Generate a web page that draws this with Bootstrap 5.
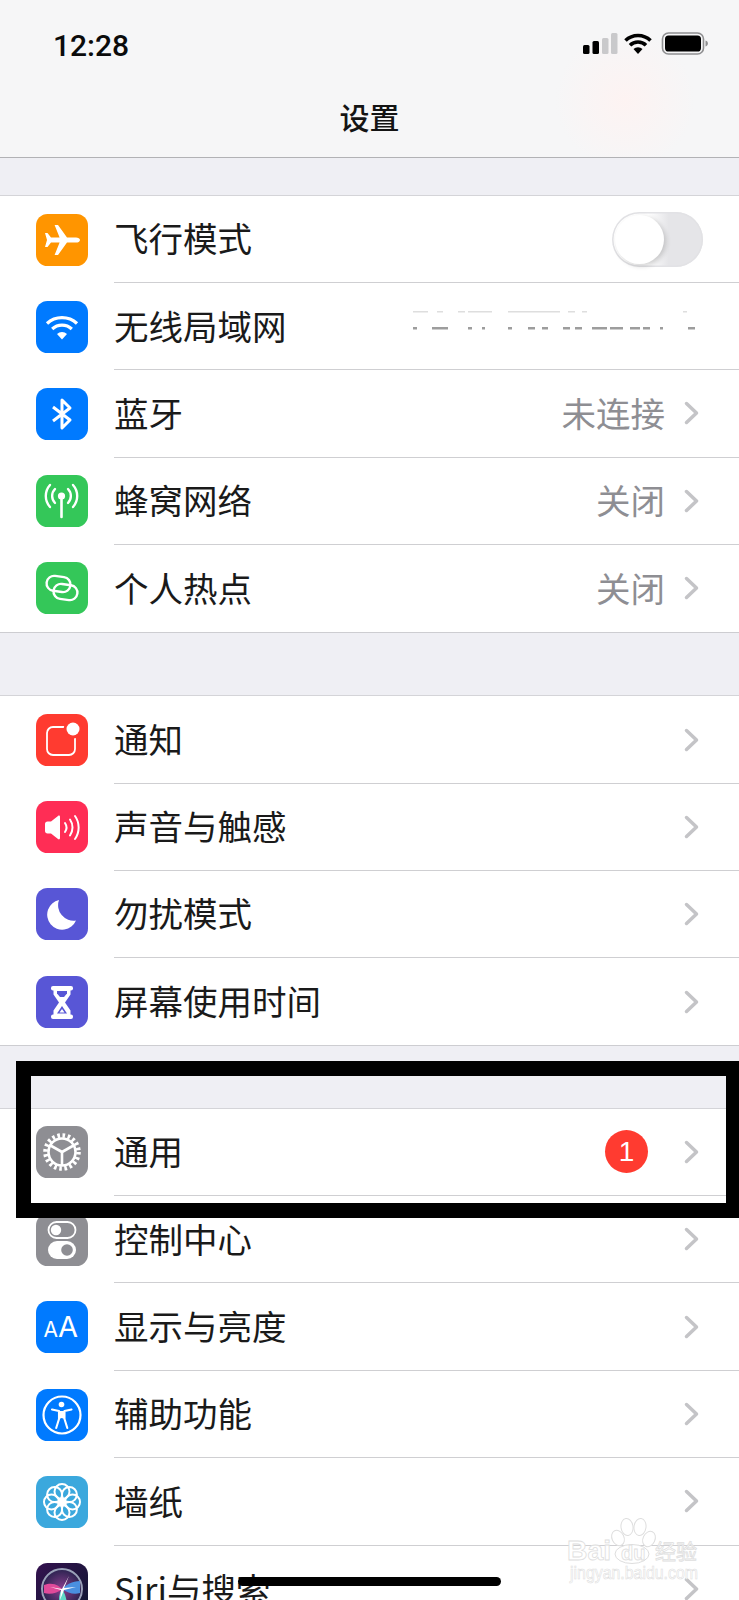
<!DOCTYPE html>
<html lang="zh-CN">
<head>
<meta charset="utf-8">
<title>设置</title>
<meta name="viewport" content="width=device-width, initial-scale=1">
<link href="https://cdn.jsdelivr.net/npm/bootstrap@5.3.0/dist/css/bootstrap.min.css" rel="stylesheet">
<style>
  html, body { height: 1600px; overflow: hidden; }
  body { background: #efeff4; font-family: "Noto Sans CJK SC", "Liberation Sans", sans-serif; color: #1a1a1a; }
  .phone { position: relative; width: 739px; height: 1600px; overflow: hidden; }

  /* top bar */
  .topbar {
    height: 158px; border-bottom: 1px solid #b2b2b5;
    background: radial-gradient(ellipse 70px 70px at 625px 100px, #fdf3f2 0, rgba(253,243,242,0) 100%), #f6f6f7;
  }
  .statusline { height: 88px; padding: 0 26px 0 53px; }
  .clock { font-family: Roboto, "Liberation Sans", sans-serif; font-weight: 500; font-size: 30px; line-height: 1; color: #0b0b0b; margin-top: 3px; }
  .statusicons { display: block; }
  .pagetitle { height: 60px; font-size: 30px; font-weight: 500; line-height: 56px; margin: 0; color: #141414; }

  /* settings groups */
  .settings-stack { padding-top: 37px; }
  .group { border-top: 1px solid #d4d4d8; border-bottom: 1px solid #cdcdd1; border-radius: 0; margin-bottom: 62.5px; }
  .group-tall { margin-top: -1px; }
  .group .list-group-item { height: 87.2px; border: 0; padding: 0 0 0 36px; background: #fff; color: #1a1a1a; }
  .group-tall .list-group-item { height: 87.4px; }
  .tile { width: 52px; height: 52px; border-radius: 11.5px; flex: none; display: block; margin-right: 26px; overflow: hidden; }
  .rowline { height: 100%; padding-right: 40px; border-bottom: 1px solid #cfcfd2; }
  .list-group-item:last-child .rowline { border-bottom: 0; }
  .rowlabel { font-size: 34.5px; line-height: 1; margin-bottom: 3px; }
  .rowvalue { font-size: 34.5px; line-height: 1; color: #8e8e93; margin: 0 19px 3px 0; }
  .chev { display: block; flex: none; }
  .ssid-scrap { display: block; margin: 0 1px 10px 0; }

  /* off switch */
  .toggle-off { display: block; position: relative; width: 91px; height: 55px; border-radius: 28px; margin-right: -4px; background: linear-gradient(90deg, #fff 0, #fff 40%, #e5e5e8 62%, #e5e5e8 100%); box-shadow: inset 0 0 0 1.5px #e2e2e5; }
  .toggle-off::after { content: ""; position: absolute; left: 3px; top: 3px; width: 49px; height: 49px; border-radius: 50%; background: #fff; box-shadow: 2px 2px 5px rgba(0,0,0,.18); }

  /* unread count */
  .countdot { width: 43px; height: 43px; padding: 0; margin-right: 36px; display: flex; align-items: center; justify-content: center; background: #ff3b30; color: #fff; font-family: "Liberation Sans", sans-serif; font-weight: 400; font-size: 28px; line-height: 1; }

  /* marks laid over the list */
  .callout { position: absolute; left: 16px; top: 1061px; width: 723px; height: 157px; border: solid #000; border-width: 15px 13px 15px 15px; }
  .homebar { position: absolute; left: 238px; top: 1577px; width: 263px; height: 9px; border-radius: 5px; background: #000; }
  .stamp { position: absolute; left: 560px; top: 1515px; }
  .stamp text { stroke: #dedede; stroke-width: .8; fill: #fff; font-family: "Liberation Sans", sans-serif; }
  .stamp .stamp-url { stroke-width: .6; }
  .stamp .stamp-cjk { font-family: "Noto Sans CJK SC", sans-serif; }
</style>
</head>
<body>
<div class="phone">

  <header class="topbar">
    <div class="statusline d-flex align-items-center justify-content-between">
      <span class="clock">12:28</span>
      <svg class="statusicons" width="130" height="24" viewBox="0 0 130 24" role="img" aria-label="状态">
        <rect x="0" y="13" width="6.5" height="9" rx="1.5" fill="#000"/>
        <rect x="9.5" y="9" width="6.5" height="13" rx="1.5" fill="#000"/>
        <rect x="19" y="6" width="6.5" height="16" rx="1.5" fill="#c9c9cb"/>
        <rect x="28" y="1" width="6.5" height="21" rx="1.5" fill="#c9c9cb"/>
        <g fill="none" stroke="#000" stroke-width="3.6">
          <path d="M42.5 8.5a18 18 0 0 1 25 0"/>
          <path d="M47 13.2a11.5 11.5 0 0 1 16 0"/>
        </g>
        <path d="M50.5 17a6.5 6.5 0 0 1 9 0L55 22z" fill="#000"/>
        <rect x="79.5" y="1" width="41" height="21" rx="6" fill="none" stroke="#8f8f91" stroke-width="1.6"/>
        <rect x="82" y="3.5" width="36" height="16" rx="3.6" fill="#000"/>
        <path d="M122.5 8.5c1.6.4 2.4 1.6 2.4 3s-.8 2.6-2.4 3z" fill="#8f8f91"/>
      </svg>
    </div>
    <h1 class="pagetitle text-center">设置</h1>
  </header>

  <main class="settings-stack">

    <div class="list-group group">
      <div class="list-group-item d-flex align-items-center">
        <svg class="tile" viewBox="0 0 52 52"><rect width="52" height="52" fill="#ff9500"/><path d="M44 26c0 1.6-2 2.6-4 2.6h-9L22 41h-3.400l5-12.400h-8.600L11.500 33H9l2-7-2-7h2.500L15 23.400h8.600L18.600 11H22l9 12.400h9c2 0 4 1 4 2.600z" fill="#fff"/></svg>
        <div class="rowline flex-grow-1 d-flex align-items-center justify-content-between">
          <span class="rowlabel">飞行模式</span>
          <span class="toggle-off" role="switch" aria-checked="false"></span>
        </div>
      </div>
      <div class="list-group-item d-flex align-items-center">
        <svg class="tile" viewBox="0 0 52 52"><rect width="52" height="52" fill="#007aff"/><g fill="none" stroke="#fff" stroke-width="3.300"><path d="M11 22.500a22 22 0 0 1 30 0"/><path d="M16.200 28a14.500 14.500 0 0 1 19.600 0"/></g><path d="M21 33a7.500 7.500 0 0 1 10 0l-5 5.500z" fill="#fff"/></svg>
        <div class="rowline flex-grow-1 d-flex align-items-center justify-content-between">
          <span class="rowlabel">无线局域网</span>
          <svg class="ssid-scrap" width="285" height="26" viewBox="0 0 285 26" role="presentation">
            <g fill="#dedede"><rect x="0" y="3" width="15" height="1.500"/><rect x="24" y="3" width="6" height="1.500"/><rect x="45" y="3" width="7" height="1.500"/><rect x="55" y="3" width="24" height="1.500"/><rect x="95" y="3" width="52" height="1.500"/><rect x="155" y="3" width="7" height="1.500"/><rect x="169" y="3" width="5" height="1.500"/><rect x="270" y="3" width="4" height="1.500"/></g>
            <g fill="#9d9d9d"><rect x="0" y="19" width="4" height="2.500"/><rect x="19" y="19" width="16" height="2.500"/><rect x="55" y="19" width="4" height="2.500"/><rect x="69" y="19" width="3" height="2.500"/><rect x="95" y="19" width="4" height="2.500"/><rect x="115" y="19" width="7" height="2.500"/><rect x="129" y="19" width="6" height="2.500"/><rect x="150" y="19" width="7" height="2.500"/><rect x="162" y="19" width="7" height="2.500"/><rect x="179" y="19" width="15" height="2.500"/><rect x="197" y="19" width="13" height="2.500"/><rect x="217" y="19" width="10" height="2.500"/><rect x="230" y="19" width="7" height="2.500"/><rect x="247" y="19" width="3" height="2.500"/><rect x="275" y="19" width="7" height="2.500"/></g>
          </svg>
        </div>
      </div>
      <div class="list-group-item d-flex align-items-center">
        <svg class="tile" viewBox="0 0 52 52"><rect width="52" height="52" fill="#007aff"/><path d="M17 19l17 13-8 8V12l8 8-17 13" fill="none" stroke="#fff" stroke-width="3" stroke-linejoin="round"/></svg>
        <div class="rowline flex-grow-1 d-flex align-items-center">
          <span class="rowlabel me-auto">蓝牙</span>
          <span class="rowvalue">未连接</span>
          <svg class="chev" width="15" height="24" viewBox="0 0 15 24"><path d="M2.500 2.500l10 9.500-10 9.500" fill="none" stroke="#c4c4c7" stroke-width="3.500" stroke-linecap="round" stroke-linejoin="round"/></svg>
        </div>
      </div>
      <div class="list-group-item d-flex align-items-center">
        <svg class="tile" viewBox="0 0 52 52"><rect width="52" height="52" fill="#34c759"/><circle cx="25.500" cy="21" r="3.600" fill="#fff"/><path d="M25.500 22v20" stroke="#fff" stroke-width="2.600" stroke-linecap="round"/><g fill="none" stroke="#fff" stroke-width="2.400" stroke-linecap="round"><path d="M19 14a10 10 0 0 0 0 14"/><path d="M32 14a10 10 0 0 1 0 14"/><path d="M14 10a16.500 16.500 0 0 0 0 22"/><path d="M37 10a16.500 16.500 0 0 1 0 22"/></g></svg>
        <div class="rowline flex-grow-1 d-flex align-items-center">
          <span class="rowlabel me-auto">蜂窝网络</span>
          <span class="rowvalue">关闭</span>
          <svg class="chev" width="15" height="24" viewBox="0 0 15 24"><path d="M2.500 2.500l10 9.500-10 9.500" fill="none" stroke="#c4c4c7" stroke-width="3.500" stroke-linecap="round" stroke-linejoin="round"/></svg>
        </div>
      </div>
      <div class="list-group-item d-flex align-items-center">
        <svg class="tile" viewBox="0 0 52 52"><rect width="52" height="52" fill="#34c759"/><g fill="none" stroke="#fff" stroke-width="2.400" transform="rotate(8 26 26)"><rect x="10" y="15" width="24" height="15" rx="7.500"/><rect x="18" y="22" width="24" height="15" rx="7.500"/></g></svg>
        <div class="rowline flex-grow-1 d-flex align-items-center">
          <span class="rowlabel me-auto">个人热点</span>
          <span class="rowvalue">关闭</span>
          <svg class="chev" width="15" height="24" viewBox="0 0 15 24"><path d="M2.500 2.500l10 9.500-10 9.500" fill="none" stroke="#c4c4c7" stroke-width="3.500" stroke-linecap="round" stroke-linejoin="round"/></svg>
        </div>
      </div>
    </div>

    <div class="list-group group">
      <div class="list-group-item d-flex align-items-center">
        <svg class="tile" viewBox="0 0 52 52"><rect width="52" height="52" fill="#ff3b30"/><rect x="11" y="13" width="28" height="28" rx="6" fill="none" stroke="#fff" stroke-width="1.800"/><circle cx="37" cy="15" r="9.500" fill="#ff3b30"/><circle cx="37" cy="15" r="6.500" fill="#fff"/></svg>
        <div class="rowline flex-grow-1 d-flex align-items-center">
          <span class="rowlabel me-auto">通知</span>
          <svg class="chev" width="15" height="24" viewBox="0 0 15 24"><path d="M2.500 2.500l10 9.500-10 9.500" fill="none" stroke="#c4c4c7" stroke-width="3.500" stroke-linecap="round" stroke-linejoin="round"/></svg>
        </div>
      </div>
      <div class="list-group-item d-flex align-items-center">
        <svg class="tile" viewBox="0 0 52 52"><rect width="52" height="52" fill="#ff2d55"/><path d="M9 23c0-1.500 1-2.500 2.500-2.500H15l7-5.500c1-.8 2-.3 2 1v21c0 1.300-1 1.800-2 1l-7-5.500h-3.500C10 32.500 9 31.500 9 30z" fill="#fff"/><g fill="none" stroke="#fff" stroke-width="2" stroke-linecap="round"><path d="M29 22a8 8 0 0 1 0 9"/><path d="M34 18.500a14 14 0 0 1 0 16"/><path d="M39 15a20 20 0 0 1 0 23"/></g></svg>
        <div class="rowline flex-grow-1 d-flex align-items-center">
          <span class="rowlabel me-auto">声音与触感</span>
          <svg class="chev" width="15" height="24" viewBox="0 0 15 24"><path d="M2.500 2.500l10 9.500-10 9.500" fill="none" stroke="#c4c4c7" stroke-width="3.500" stroke-linecap="round" stroke-linejoin="round"/></svg>
        </div>
      </div>
      <div class="list-group-item d-flex align-items-center">
        <svg class="tile" viewBox="0 0 52 52"><rect width="52" height="52" fill="#5856d6"/><path d="M23 12A15 15 0 1 0 40 32.500 15.500 15.500 0 0 1 23 12z" fill="#fff"/></svg>
        <div class="rowline flex-grow-1 d-flex align-items-center">
          <span class="rowlabel me-auto">勿扰模式</span>
          <svg class="chev" width="15" height="24" viewBox="0 0 15 24"><path d="M2.500 2.500l10 9.500-10 9.500" fill="none" stroke="#c4c4c7" stroke-width="3.500" stroke-linecap="round" stroke-linejoin="round"/></svg>
        </div>
      </div>
      <div class="list-group-item d-flex align-items-center">
        <svg class="tile" viewBox="0 0 52 52"><rect width="52" height="52" fill="#5856d6"/><rect x="15" y="10" width="22" height="4.500" rx="2" fill="#fff"/><rect x="15" y="38.500" width="22" height="4.500" rx="2" fill="#fff"/><path d="M17.500 13h17v5.500L29 26.500l5.500 8V40h-17v-5.500l5.500-8-5.500-8z" fill="#fff"/><path d="M21 15h10v2.500l-3 3.500h-4l-3-3.500z" fill="#5856d6"/><path d="M26 30l-5 7.500h10z" fill="#5856d6"/><path d="M26 33l-2.500 3.500h5z" fill="#fff"/></svg>
        <div class="rowline flex-grow-1 d-flex align-items-center">
          <span class="rowlabel me-auto">屏幕使用时间</span>
          <svg class="chev" width="15" height="24" viewBox="0 0 15 24"><path d="M2.500 2.500l10 9.500-10 9.500" fill="none" stroke="#c4c4c7" stroke-width="3.500" stroke-linecap="round" stroke-linejoin="round"/></svg>
        </div>
      </div>
    </div>

    <div class="list-group group group-tall">
      <div class="list-group-item d-flex align-items-center">
        <svg class="tile" viewBox="0 0 52 52"><rect width="52" height="52" fill="#8e8e93"/><circle cx="26" cy="26" r="16.500" fill="none" stroke="#fff" stroke-width="4.600" stroke-dasharray="2.600 2.584"/><circle cx="26" cy="26" r="13.500" fill="none" stroke="#fff" stroke-width="2.600"/><g stroke="#fff" stroke-width="2.600" fill="none"><path d="M26 26L14.500 19.500"/><path d="M26 26L37.500 19.500"/><path d="M26 26V39"/></g></svg>
        <div class="rowline flex-grow-1 d-flex align-items-center">
          <span class="rowlabel me-auto">通用</span>
          <span class="badge rounded-circle countdot">1</span>
          <svg class="chev" width="15" height="24" viewBox="0 0 15 24"><path d="M2.500 2.500l10 9.500-10 9.500" fill="none" stroke="#c4c4c7" stroke-width="3.500" stroke-linecap="round" stroke-linejoin="round"/></svg>
        </div>
      </div>
      <div class="list-group-item d-flex align-items-center">
        <svg class="tile" viewBox="0 0 52 52"><rect width="52" height="52" fill="#8e8e93"/><rect x="12.500" y="8" width="27" height="16" rx="8" fill="none" stroke="#fff" stroke-width="1.800"/><circle cx="20" cy="16" r="5.200" fill="#fff"/><rect x="12" y="27" width="28" height="18" rx="9" fill="#fff"/><circle cx="31" cy="36" r="5.800" fill="#8e8e93"/></svg>
        <div class="rowline flex-grow-1 d-flex align-items-center">
          <span class="rowlabel me-auto">控制中心</span>
          <svg class="chev" width="15" height="24" viewBox="0 0 15 24"><path d="M2.500 2.500l10 9.500-10 9.500" fill="none" stroke="#c4c4c7" stroke-width="3.500" stroke-linecap="round" stroke-linejoin="round"/></svg>
        </div>
      </div>
      <div class="list-group-item d-flex align-items-center">
        <svg class="tile" viewBox="0 0 52 52"><rect width="52" height="52" fill="#007aff"/><text x="7.500" y="36" fill="#fff" font-family="Inter, 'Liberation Sans', sans-serif" font-size="21">A</text><text x="22" y="36" fill="#fff" font-family="Inter, 'Liberation Sans', sans-serif" font-size="29">A</text></svg>
        <div class="rowline flex-grow-1 d-flex align-items-center">
          <span class="rowlabel me-auto">显示与亮度</span>
          <svg class="chev" width="15" height="24" viewBox="0 0 15 24"><path d="M2.500 2.500l10 9.500-10 9.500" fill="none" stroke="#c4c4c7" stroke-width="3.500" stroke-linecap="round" stroke-linejoin="round"/></svg>
        </div>
      </div>
      <div class="list-group-item d-flex align-items-center">
        <svg class="tile" viewBox="0 0 52 52"><rect width="52" height="52" fill="#007aff"/><circle cx="26" cy="26" r="18.500" fill="none" stroke="#fff" stroke-width="2.200"/><circle cx="25.500" cy="15.500" r="2.800" fill="#fff"/><path d="M16 20.500l7 1.500v8l-2.800 9M35.500 20.500l-7 1.500v8l2.800 9" fill="none" stroke="#fff" stroke-width="2.100" stroke-linecap="round" stroke-linejoin="round"/><path d="M23 22h5.500v8l-2.800-1-2.700 1z" fill="#fff"/></svg>
        <div class="rowline flex-grow-1 d-flex align-items-center">
          <span class="rowlabel me-auto">辅助功能</span>
          <svg class="chev" width="15" height="24" viewBox="0 0 15 24"><path d="M2.500 2.500l10 9.500-10 9.500" fill="none" stroke="#c4c4c7" stroke-width="3.500" stroke-linecap="round" stroke-linejoin="round"/></svg>
        </div>
      </div>
      <div class="list-group-item d-flex align-items-center">
        <svg class="tile" viewBox="0 0 52 52"><rect width="52" height="52" fill="#3ba8dd"/><g fill="none" stroke="#fff" stroke-width="2"><circle cx="26" cy="15.500" r="7.500"/><circle cx="26" cy="36.500" r="7.500"/><circle cx="15.500" cy="26" r="7.500"/><circle cx="36.500" cy="26" r="7.500"/><circle cx="18.600" cy="18.600" r="7.500"/><circle cx="33.400" cy="18.600" r="7.500"/><circle cx="18.600" cy="33.400" r="7.500"/><circle cx="33.400" cy="33.400" r="7.500"/></g><circle cx="26" cy="26" r="3.200" fill="#fff"/></svg>
        <div class="rowline flex-grow-1 d-flex align-items-center">
          <span class="rowlabel me-auto">墙纸</span>
          <svg class="chev" width="15" height="24" viewBox="0 0 15 24"><path d="M2.500 2.500l10 9.500-10 9.500" fill="none" stroke="#c4c4c7" stroke-width="3.500" stroke-linecap="round" stroke-linejoin="round"/></svg>
        </div>
      </div>
      <div class="list-group-item d-flex align-items-center">
        <svg class="tile" viewBox="0 0 52 52">
          <defs>
            <linearGradient id="siriBack" x1="0" y1="0" x2="1" y2="1"><stop offset="0" stop-color="#34124f"/><stop offset="1" stop-color="#0e1730"/></linearGradient>
            <radialGradient id="siriCore"><stop offset="0" stop-color="#8a3f8f"/><stop offset="1" stop-color="#2b2350"/></radialGradient>
          </defs>
          <rect width="52" height="52" fill="url(#siriBack)"/>
          <circle cx="26" cy="26" r="20" fill="url(#siriCore)" stroke="#9aa0b8" stroke-width="2"/>
          <path d="M8 22C18 18 24 24 26 26 22 30 14 32 8 30z" fill="#e04a9a"/>
          <path d="M44 18C36 18 30 22 26 26 32 30 38 32 44 30z" fill="#4a8fe0"/>
          <path d="M26 26C30 32 32 40 30 46 24 44 20 36 26 26z" fill="#5fd8c8"/>
          <path d="M26 26L33 13 28 25 40 24 28 27 24 37 25 27 14 24z" fill="#fff"/>
        </svg>
        <div class="rowline flex-grow-1 d-flex align-items-center">
          <span class="rowlabel me-auto">Siri与搜索</span>
          <svg class="chev" width="15" height="24" viewBox="0 0 15 24"><path d="M2.500 2.500l10 9.500-10 9.500" fill="none" stroke="#c4c4c7" stroke-width="3.500" stroke-linecap="round" stroke-linejoin="round"/></svg>
        </div>
      </div>
    </div>
  </main>

  <!-- highlight frame, site stamp and home indicator -->
  <div class="callout"></div>

  <svg class="stamp" width="150" height="72" viewBox="0 0 150 72">
    <g fill="#fff" stroke="#dedede" stroke-width="1">
      <ellipse cx="58" cy="23" rx="6" ry="8" transform="rotate(-25 58 23)"/>
      <ellipse cx="67" cy="12" rx="6" ry="8.500" transform="rotate(-8 67 12)"/>
      <ellipse cx="80" cy="12" rx="6" ry="8.500" transform="rotate(8 80 12)"/>
      <ellipse cx="89" cy="24" rx="6" ry="8" transform="rotate(25 89 24)"/>
      <ellipse cx="72" cy="39" rx="17" ry="9.500"/>
    </g>
    <text x="7" y="45" font-size="28" font-weight="700" textLength="44" lengthAdjust="spacingAndGlyphs">Bai</text>
    <text x="61" y="45" font-size="20" font-weight="700">du</text>
    <text class="stamp-cjk" x="95" y="44" font-size="21">经验</text>
    <text class="stamp-url" x="10" y="64" font-size="18" textLength="128" lengthAdjust="spacingAndGlyphs">jingyan.baidu.com</text>
  </svg>

  <div class="homebar"></div>
</div>
<script src="https://cdn.jsdelivr.net/npm/bootstrap@5.3.0/dist/js/bootstrap.bundle.min.js"></script>
</body>
</html>
